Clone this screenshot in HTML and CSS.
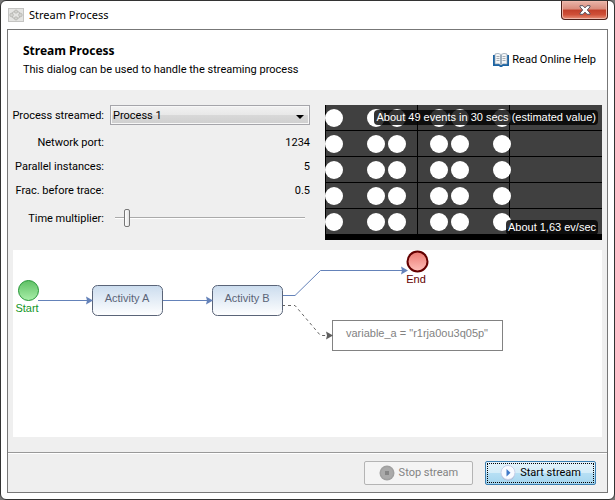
FILE: index.html
```html
<!DOCTYPE html>
<html lang="en">
<head>
<meta charset="utf-8">
<title>Stream Process</title>
<link rel="stylesheet" href="styles.css">
</head>
<body>
<div class="window">
  <div class="titlebar">
    <svg class="app-icon" width="16" height="14" viewBox="0 0 16 14" aria-hidden="true">
      <rect x=".5" y=".5" width="15" height="13" fill="#e4e4e2" stroke="#c4c4c2"/>
      <ellipse cx="8" cy="7" rx="4.5" ry="3.5" fill="none" stroke="#b5b5b2"/>
      <g fill="#d2d2ce" stroke="#b0b0ac" stroke-width=".7"><circle cx="8" cy="3.6" r="1.6"/><circle cx="8" cy="10.4" r="1.6"/><circle cx="3.6" cy="7" r="1.8"/><circle cx="12.4" cy="7" r="1.8"/></g>
    </svg>
    <span class="window-title">Stream Process</span>
    <button class="close" type="button" aria-label="Close">
      <svg width="12" height="10" viewBox="0 0 12 10" aria-hidden="true"><path d="M1 .7h3l2 2.200L8 .7h3v1.200L8.300 5 11 8.100v1.200H8L6 7.100 4 9.300H1V8.100L3.700 5 1 1.900z" fill="#fff" stroke="#5a5560"/></svg>
    </button>
  </div>
  <div class="dialog">
    <header class="header">
      <div>
        <h1>Stream Process</h1>
        <p>This dialog can be used to handle the streaming process</p>
      </div>
      <a class="help" href="#help">
        <svg width="16" height="14" viewBox="0 0 16 14" aria-hidden="true">
          <path d="M0 2h2v9h5l1 1 1-1h5V2h2v11H10l-1 1H7l-1-1H0z" fill="#1c64a4"/>
          <path d="M2 1q3-1.500 6 .5Q11-.5 14 1v10q-4-1-6 1-2-2-6-1z" fill="#f4f6f8" stroke="#8b9cac" stroke-width=".7"/>
          <path d="M8 2v9" stroke="#456783"/>
          <path d="M3.500 3.500h3M3.500 5.500h3M3.500 7.500h3M9.500 3.500h3M9.500 5.500h3M9.500 7.500h3" stroke="#a7aeb5"/>
        </svg>
        <span>Read Online Help</span>
      </a>
    </header>
    <main class="content">
      <div class="top">
        <form class="settings">
          <label class="first" for="process">Process streamed:</label>
          <div class="select-wrap first">
            <select id="process"><option>Process 1</option></select>
            <svg class="arrow" width="8" height="4" viewBox="0 0 8 4" aria-hidden="true"><path d="M0 0h8L4 4z"/></svg>
          </div>
          <label for="port">Network port:</label>
          <output id="port">1234</output>
          <label for="instances">Parallel instances:</label>
          <output id="instances">5</output>
          <label for="frac">Frac. before trace:</label>
          <output id="frac">0.5</output>
          <label for="multiplier">Time multiplier:</label>
          <input id="multiplier" type="range" min="0" max="100" value="5">
        </form>
        <div class="events">
          <svg class="lanes" width="100%" height="135" aria-hidden="true">
            <defs>
              <g id="lane">
                <rect x="1" width="100%" height="25" fill="#404040"/>
                <path d="M92.500 0v26M184.500 0v26" stroke="#000"/>
                <g fill="#fff"><circle cx="9" cy="13" r="9"/><circle cx="51" cy="13" r="9"/><circle cx="72" cy="13" r="9"/><circle cx="114" cy="13" r="9"/><circle cx="135" cy="13" r="9"/><circle cx="177" cy="13" r="9"/></g>
              </g>
            </defs>
            <use href="#lane"/>
            <use href="#lane" y="26"/>
            <use href="#lane" y="52"/>
            <use href="#lane" y="78"/>
            <use href="#lane" y="104"/>
          </svg>
          <span class="badge total">About 49 events in 30 secs (estimated value)</span>
          <span class="badge rate">About 1,63 ev/sec</span>
        </div>
      </div>
      <div class="diagram">
        <svg width="100%" height="100%" role="img" aria-label="Process model">
          <defs>
            <linearGradient id="task" x2="0" y2="1"><stop stop-color="#cbdcee"/><stop offset="1" stop-color="#fff"/></linearGradient>
            <linearGradient id="green" x2="0" y2="1"><stop stop-color="#5fc065"/><stop offset="1" stop-color="#a9efa9"/></linearGradient>
            <linearGradient id="red" x2="0" y2="1"><stop stop-color="#ea7770"/><stop offset="1" stop-color="#ffc0ba"/></linearGradient>
            <path id="head" d="M0 0-7-4-6 0-7 4z"/>
          </defs>
          <g fill="none" stroke="#6482b9">
            <path d="M25 50.500h50M149 50.500h46M269 45.500h13L307.500 20.500h84"/>
            <path d="M269 55.500h13L307.500 85.500h10" stroke="#646464" stroke-dasharray="3 3"/>
          </g>
          <circle cx="15.500" cy="40.500" r="10" fill="url(#green)" stroke="#259637"/>
          <circle cx="404.500" cy="11.500" r="10" fill="url(#red)" stroke="#640000" stroke-width="2"/>
          <g fill="url(#task)" stroke="#5a6478">
            <rect x="79.500" y="35.500" width="70" height="30" rx="5"/>
            <rect x="199.500" y="35.500" width="70" height="30" rx="5"/>
          </g>
          <rect x="319.500" y="70.500" width="170" height="30" fill="#fff" stroke="#828282"/>
          <g fill="#6482b9">
            <use href="#head" x="80" y="50.500"/><use href="#head" x="200" y="50.500"/><use href="#head" x="395" y="20.500"/>
            <use href="#head" x="320" y="85.500" fill="#5f5f5f"/>
          </g>
          <g class="node-text">
            <text x="14" y="62" fill="#149628">Start</text>
            <text x="403" y="33" fill="#640000">End</text>
            <text x="114" y="52" fill="#5a6478">Activity A</text>
            <text x="234" y="52" fill="#5a6478">Activity B</text>
            <text x="404" y="87" fill="#828282">variable_a = "r1rja0ou3q05p"</text>
          </g>
        </svg>
      </div>
    </main>
    <footer class="footer">
      <button class="btn" type="button" disabled>
        <svg width="16" height="16" viewBox="0 0 16 16" aria-hidden="true"><circle cx="8" cy="8" r="7.500" fill="#a0a0a0"/><circle cx="8" cy="8" r="6" fill="#aaa"/><rect x="6" y="6" width="4" height="4" fill="#858585"/></svg>
        Stop stream
      </button>
      <button class="btn primary" type="button">
        <svg width="16" height="16" viewBox="0 0 16 16" aria-hidden="true"><circle cx="8" cy="8.500" r="7" fill="#a9b4cf"/><circle cx="8" cy="7.500" r="7" fill="#f8faff" stroke="#c9d2ea"/><path d="M6.500 4v7.500l4-3.700z" fill="#3f78c8"/></svg>
        Start stream
      </button>
    </footer>
  </div>
</div>
</body>
</html>
```
FILE: styles.css
```css
* { box-sizing: border-box; }

body {
  margin: 0;
  background: #777;
  color: #000;
  font: 11px/16px Roboto, sans-serif;
}

.window {
  display: flex;
  flex-direction: column;
  height: 100vh;
  padding: 0 6px 6px;
  background: #fff;
  border: 1px solid #333;
  border-radius: 6px;
}

.titlebar {
  display: flex;
  align-items: center;
  gap: 5px;
  height: 28px;
  padding-left: 1px;
}

.window-title { font: 11px/16px "Noto Sans", sans-serif; }

.close {
  display: flex;
  align-items: center;
  justify-content: center;
  align-self: flex-start;
  width: 47px;
  height: 19px;
  margin-left: auto;
  padding: 0;
  border: 1px solid #4b2019;
  border-top: 0;
  border-radius: 0 0 4px 4px;
  background: linear-gradient(#e9b5a9, #d98b7b 45%, #c2402a 50%, #cf5038 75%, #e89078);
  box-shadow: inset 0 0 0 1px #f0b8aa;
}

.dialog {
  display: flex;
  flex: 1;
  flex-direction: column;
  border: 1px solid #777;
  background: #efefef;
}

.header {
  display: flex;
  align-items: center;
  justify-content: space-between;
  height: 60px;
  padding: 0 11px 0 15px;
  background: #fff;
}

h1 { margin: 0 0 3px; font: bold 12px/16px "Noto Sans", sans-serif; }
p { margin: 0; }

.help {
  display: flex;
  align-items: center;
  gap: 3px;
  color: inherit;
  text-decoration: none;
}

.content {
  display: flex;
  flex: 1;
  flex-direction: column;
  gap: 10px;
  padding: 15px 5px;
}

.top {
  display: grid;
  grid-template-columns: 297fr 277fr;
  gap: 15px;
}

.settings {
  display: grid;
  grid-template-columns: 91px 1fr;
  grid-template-rows: 25px 24px 24px 24px 32px;
  align-content: start;
  align-items: center;
  column-gap: 6px;
}

.settings label { padding-top: 2px; text-align: right; white-space: nowrap; justify-self: end; }
.settings output { padding-top: 2px; text-align: right; }
.settings .first { margin-bottom: 5px; }

.select-wrap { position: relative; display: flex; }

select {
  width: 100%;
  height: 20px;
  padding: 1px 2px 0;
  appearance: none;
  border: 1px solid #a5a5aa;
  border-radius: 0;
  background: linear-gradient(#f2f2f2, #e8e8e8 48%, #d8d8d8 52%, #cfcfcf);
  box-shadow: inset 0 0 0 1px #f7f7f7;
  color: #000;
  font: inherit;
}

.arrow { position: absolute; right: 6px; top: 10px; }

input[type="range"] {
  width: auto;
  height: 20px;
  margin: 0 5px;
  appearance: none;
  background: none;
}

input[type="range"]::-webkit-slider-runnable-track {
  height: 2px;
  border-top: 1px solid #aaa;
  border-bottom: 1px solid #fff;
}

input[type="range"]::-webkit-slider-thumb {
  width: 6px;
  height: 18px;
  margin-top: -9px;
  appearance: none;
  border: 1px solid #777;
  border-radius: 2px;
  background: linear-gradient(90deg, #fff, #e4e4e4);
}

.events {
  position: relative;
  height: 135px;
  overflow: hidden;
  background: #000;
}

.lanes { display: block; }

.badge {
  position: absolute;
  right: 4px;
  padding: 0 2px;
  border-radius: 4px;
  background: rgba(0, 0, 0, .8);
  color: #fff;
  font: 11px/15px "Liberation Sans", sans-serif;
  white-space: nowrap;
}

.total { top: 5px; }
.rate { bottom: 5px; }

.diagram { flex: 1; min-height: 110px; background: #fff; }
.diagram svg { display: block; }
.node-text { font: 11px "Liberation Sans", sans-serif; text-anchor: middle; }

.footer {
  display: flex;
  justify-content: flex-end;
  gap: 12px;
  padding: 8px 11px 7px;
  border-top: 1px solid #999;
  box-shadow: inset 0 1px #fff;
}

.btn {
  display: flex;
  align-items: center;
  justify-content: center;
  gap: 4px;
  height: 24px;
  padding: 0 14px;
  border: 1px solid #b4b4b4;
  border-radius: 2px;
  background: #f4f4f4;
  color: #838383;
  font: inherit;
}

.primary {
  border-color: #3c7fb1;
  outline: 1px dotted #000;
  outline-offset: -3px;
  background: linear-gradient(#e5f3fb, #d5edf9 48%, #b6dff4 52%, #a5d5ee);
  color: #000;
}
```
